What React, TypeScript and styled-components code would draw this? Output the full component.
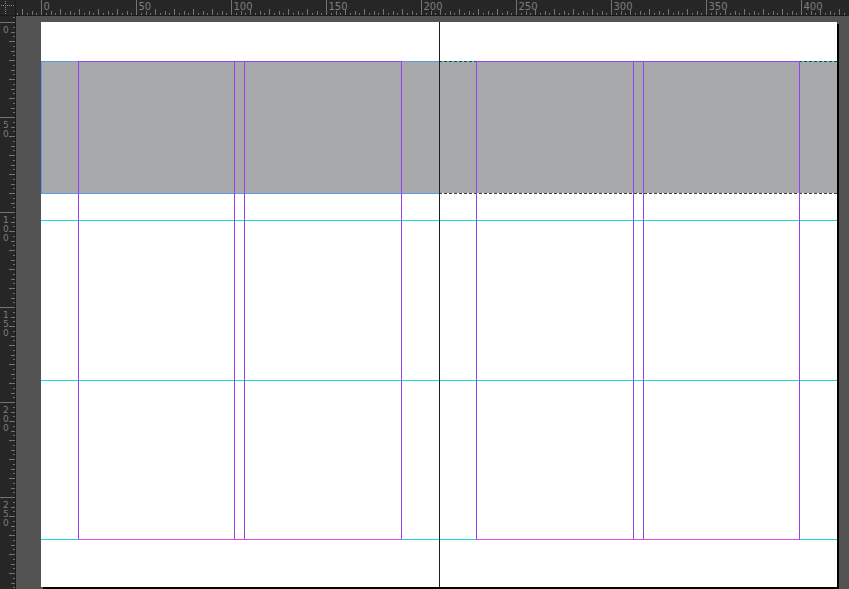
import React from 'react';
import styled, { createGlobalStyle, css } from 'styled-components';

const MM = 1.9;
const PAGE_W = 796;
const PAGE_H = 565;

const GlobalStyle = createGlobalStyle`
  html, body {
    margin: 0;
    padding: 0;
    background: #535353;
    overflow: hidden;
  }
  * { box-sizing: border-box; }
`;

const Workspace = styled.div`
  width: 849px;
  height: 589px;
  display: grid;
  grid-template-columns: 16px 1fr;
  grid-template-rows: 16px 1fr;
  background: #535353;
  font-family: 'DejaVu Sans', 'Liberation Sans', sans-serif;
`;

const Corner = styled.div`
  background: #262626;
  border-right: 1px solid #1b1b1b;
  border-bottom: 1px solid #1b1b1b;
  position: relative;
`;

const RulerBar = styled.div<{ $vertical?: boolean }>`
  background: #262626;
  overflow: hidden;
  ${(p) =>
    p.$vertical
      ? css`
          border-right: 1px solid #1b1b1b;
        `
      : css`
          border-bottom: 1px solid #1b1b1b;
        `}
`;

const Canvas = styled.div`
  padding: 6px 0 0 25px;
  overflow: hidden;
`;

const Spread = styled.div`
  position: relative;
  width: ${PAGE_W}px;
  height: ${PAGE_H}px;
  background: #fff;
  display: flex;
  box-shadow: 2px 2px 0 #000;
`;

const Page = styled.div`
  position: relative;
  height: 100%;
  width: 398px;
`;

const Frame = styled.div<{ $selected?: boolean }>`
  position: absolute;
  left: 0;
  top: 39px;
  width: ${(p) => (p.$selected ? 399 : 398)}px;
  height: 133px;
  background: #a7a9ac;
  ${(p) =>
    p.$selected
      ? css`
          border: 1px solid #5c97e8;
        `
      : css`
          background-clip: padding-box;
          border-top: 1px dashed #3c3c3c;
          border-bottom: 1px dashed #3c3c3c;
        `}
`;

const Guide = styled.div<{ $y: number }>`
  position: absolute;
  left: 0;
  right: 0;
  top: ${(p) => p.$y}px;
  height: 1px;
  background: #1fd6dc;
`;

const MarginBox = styled.div<{ $x: number; $cols: string }>`
  position: absolute;
  left: ${(p) => p.$x}px;
  top: 39px;
  width: 324px;
  height: 479px;
  border: 1px solid #9442f0;
  border-bottom-color: #e648f0;
  display: grid;
  grid-template-columns: ${(p) => p.$cols};
  column-gap: 9px;
`;

const Column = styled.div<{ $side: 'left' | 'right' }>`
  ${(p) =>
    p.$side === 'left'
      ? css`
          border-right: 1px solid #9442f0;
        `
      : css`
          border-left: 1px solid #9442f0;
        `}
`;

const Spine = styled.div`
  position: absolute;
  left: 398px;
  top: 0;
  bottom: 0;
  width: 1px;
  background: #1e1e1e;
`;

const tickLen = (i: number) => (i % 4 === 0 ? 6 : i % 2 === 0 ? 4 : 2);

const TopRuler = () => {
  const origin = 25;
  const ticks = [];
  for (let i = -8; i < 340; i++) {
    const x = Math.round(origin + i * 2.5 * MM) + 0.5;
    if (x < 0 || x > 833) continue;
    const major = i % 20 === 0;
    ticks.push(
      <line key={i} x1={x} x2={x} y1={major ? 0 : 15 - tickLen(i)} y2={15} stroke="#737373" strokeWidth={1} />
    );
    if (major && i >= 0) {
      ticks.push(
        <text key={`t${i}`} x={x + 2} y={10} fontSize={10} fill="#7d7d7d" fontFamily="DejaVu Sans, sans-serif">
          {(i * 2.5).toFixed(0)}
        </text>
      );
    }
  }
  return (
    <svg width={833} height={16}>
      {ticks}
    </svg>
  );
};

const LeftRuler = () => {
  const origin = 6;
  const ticks = [];
  for (let i = -4; i < 240; i++) {
    const y = Math.round(origin + i * 2.5 * MM) + 0.5;
    if (y < 0 || y > 573) continue;
    const major = i % 20 === 0;
    ticks.push(
      <line key={i} y1={y} y2={y} x1={major ? 0 : 15 - tickLen(i)} x2={15} stroke="#737373" strokeWidth={1} />
    );
    if (major && i >= 0) {
      const digits = String(i * 2.5).split('');
      digits.forEach((d, k) =>
        ticks.push(
          <text
            key={`t${i}-${k}`}
            x={3}
            y={y + 10 + k * 9}
            fontSize={9}
            fill="#7d7d7d"
            fontFamily="DejaVu Sans, sans-serif"
          >
            {d}
          </text>
        )
      );
    }
  }
  return (
    <svg width={16} height={573}>
      {ticks}
    </svg>
  );
};

const CornerIcon = () => (
  <svg width={16} height={16} style={{ position: 'absolute', left: 0, top: 0 }}>
    <line x1={1} x2={15} y1={5.5} y2={5.5} stroke="#8a8a8a" strokeDasharray="1 1" />
    <line x1={5.5} x2={5.5} y1={1} y2={15} stroke="#8a8a8a" strokeDasharray="1 1" />
  </svg>
);

const guidesY = [39, 198, 358, 517];

const App: React.FC = () => {
  return (
    <>
      <GlobalStyle />
      <Workspace>
        <Corner>
          <CornerIcon />
        </Corner>
        <RulerBar>
          <TopRuler />
        </RulerBar>
        <RulerBar $vertical>
          <LeftRuler />
        </RulerBar>
        <Canvas>
          <Spread>
            <Page>
              {guidesY.map((y) => (
                <Guide key={y} $y={y} />
              ))}
              <Frame $selected />
              <MarginBox $x={37} $cols="156px 157px">
                <Column $side="left" />
                <Column $side="right" />
              </MarginBox>
            </Page>
            <Page>
              {guidesY.map((y) => (
                <Guide key={y} $y={y} />
              ))}
              <Frame />
              <MarginBox $x={37} $cols="157px 156px">
                <Column $side="left" />
                <Column $side="right" />
              </MarginBox>
            </Page>
            <Spine />
          </Spread>
        </Canvas>
      </Workspace>
    </>
  );
};

export default App;
